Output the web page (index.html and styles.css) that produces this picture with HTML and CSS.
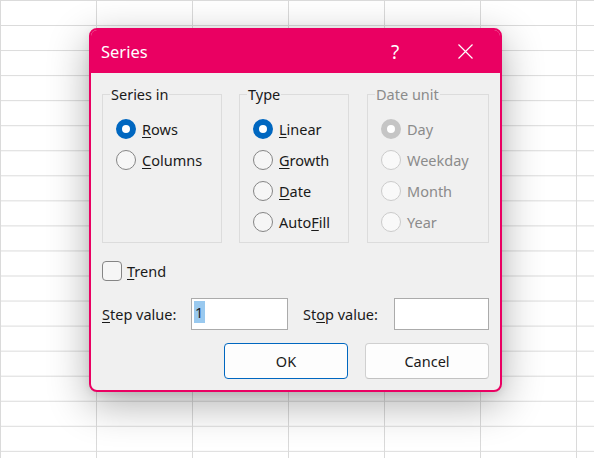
FILE: index.html
```html
<!DOCTYPE html>
<html lang="en">
<head>
<meta charset="utf-8">
<title>Series</title>
<link rel="stylesheet" href="styles.css">
</head>
<body>
<div class="sheet">
  <div class="dialog">
    <div class="titlebar">
      <span class="title">Series</span>
      <span class="help">?</span>
      <svg class="close" width="15" height="15" viewBox="0 0 15 15"><path d="M0.5 0.5 L14.5 14.5 M14.5 0.5 L0.5 14.5" stroke="#fff" stroke-width="1.2" fill="none"/></svg>
    </div>
    <div class="content">
      <div class="groups">
        <div class="group g1">
          <div class="legend">Series in</div>
          <div class="opt"><span class="radio on"></span><span class="lbl"><u>R</u>ows</span></div>
          <div class="opt"><span class="radio"></span><span class="lbl"><u>C</u>olumns</span></div>
        </div>
        <div class="group g2">
          <div class="legend">Type</div>
          <div class="opt"><span class="radio on"></span><span class="lbl"><u>L</u>inear</span></div>
          <div class="opt"><span class="radio"></span><span class="lbl"><u>G</u>rowth</span></div>
          <div class="opt"><span class="radio"></span><span class="lbl"><u>D</u>ate</span></div>
          <div class="opt"><span class="radio"></span><span class="lbl">Auto<u>F</u>ill</span></div>
        </div>
        <div class="group g3 disabled">
          <div class="legend">Date unit</div>
          <div class="opt"><span class="radio on"></span><span class="lbl">Day</span></div>
          <div class="opt"><span class="radio"></span><span class="lbl">Weekday</span></div>
          <div class="opt"><span class="radio"></span><span class="lbl">Month</span></div>
          <div class="opt"><span class="radio"></span><span class="lbl">Year</span></div>
        </div>
      </div>
      <div class="check"><span class="box"></span><span class="lbl"><u>T</u>rend</span></div>
      <div class="values">
        <span class="vlabel step"><u>S</u>tep value:</span>
        <div class="input step-in"><span class="sel">1</span></div>
        <span class="vlabel stop">St<u>o</u>p value:</span>
        <div class="input stop-in"></div>
      </div>
      <div class="buttons">
        <div class="btn primary">OK</div>
        <div class="btn">Cancel</div>
      </div>
    </div>
  </div>
</div>
</body>
</html>
```

FILE: styles.css
```css
html, body {
  margin: 0;
  padding: 0;
}
body {
  width: 594px;
  height: 458px;
  overflow: hidden;
  background-color: #ffffff;
  background-image:
    linear-gradient(to right, #dadada 1px, transparent 1px),
    linear-gradient(to bottom, #dadada 1px, transparent 1px);
  background-size: 96px 25.06px;
  font-family: "Noto Sans", "Segoe UI", "Open Sans", sans-serif;
  color: #1a1a1a;
}
.sheet {
  padding: 28px 0 0 89px;
}
.dialog {
  width: 413px;
  height: 364px;
  box-sizing: border-box;
  border: 2px solid #ea0062;
  border-radius: 8px;
  background: #f0f0f0;
  overflow: hidden;
  box-shadow: 0 12px 42px rgba(0, 0, 0, 0.32), 0 2px 8px rgba(0, 0, 0, 0.08);
  display: flex;
  flex-direction: column;
}
.titlebar {
  height: 43px;
  flex: none;
  background: #ea0062;
  display: flex;
  align-items: center;
  padding: 0 27px 0 10px;
  color: #ffffff;
}
.title {
  flex: 1;
  font-size: 16.5px;
  line-height: 20px;
  padding-top: 1px;
}
.help {
  width: 16px;
  text-align: center;
  font-size: 19px;
  line-height: 20px;
  margin-right: 55px;
  padding-top: 1px;
}
.close {
  display: block;
  flex: none;
}
.content {
  padding: 21px 11px 11px 11px;
  font-size: 14.5px;
  line-height: 20px;
}
.groups {
  display: flex;
  gap: 17px;
}
.group {
  position: relative;
  box-sizing: border-box;
  height: 149px;
  border: 1px solid #dcdcdc;
  padding: 18px 0 0 13px;
}
.g1 { width: 120px; }
.g2 { width: 110px; margin-right: 1px; }
.g3 { flex: 1; }
.legend {
  position: absolute;
  top: -11px;
  left: 7px;
  padding: 0 1px;
  background: #f0f0f0;
  line-height: 20px;
}
.opt {
  height: 31px;
  display: flex;
  align-items: center;
}
.radio {
  width: 20px;
  height: 20px;
  box-sizing: border-box;
  border-radius: 50%;
  border: 1px solid #858585;
  background: #f6f6f6;
  flex: none;
  margin-right: 6px;
}
.radio.on {
  border: 6px solid #0067c0;
  background: #ffffff;
}
.disabled {
  color: #8b8b8b;
}
.disabled .radio {
  border-color: #cbcbcb;
  background: #f9f9f9;
}
.disabled .radio.on {
  border: 6px solid #c5c5c5;
  background: #ffffff;
}
u {
  text-decoration-thickness: 1px;
  text-underline-offset: 2px;
}
.check {
  margin-top: 18px;
  height: 20px;
  display: flex;
  align-items: center;
}
.box {
  width: 20px;
  height: 20px;
  box-sizing: border-box;
  border: 1px solid #858585;
  border-radius: 4px;
  background: #f6f6f6;
  margin-right: 5px;
}
.values {
  margin-top: 17px;
  height: 32px;
  display: flex;
  align-items: center;
}
.vlabel.step { width: 89px; }
.vlabel.stop { width: 91px; margin-left: 15px; }
.input {
  box-sizing: border-box;
  height: 32px;
  border: 1px solid #ababab;
  background: #ffffff;
  padding: 2px 0 0 2px;
  align-self: stretch;
}
.step-in { width: 97px; }
.stop-in { width: 95px; }
.sel {
  display: inline-block;
  background: #99c9ef;
  line-height: 22px;
  height: 22px;
  padding: 0 2px 0 1px;
}
.buttons {
  margin-top: 13px;
  display: flex;
  justify-content: flex-end;
  gap: 17px;
}
.btn {
  width: 124px;
  height: 36px;
  box-sizing: border-box;
  border: 1px solid #d0d0d0;
  border-bottom-color: #c2c2c2;
  border-radius: 4px;
  background: #fdfdfd;
  display: flex;
  align-items: center;
  justify-content: center;
}
.btn.primary {
  border-color: #0067c0;
}
```
